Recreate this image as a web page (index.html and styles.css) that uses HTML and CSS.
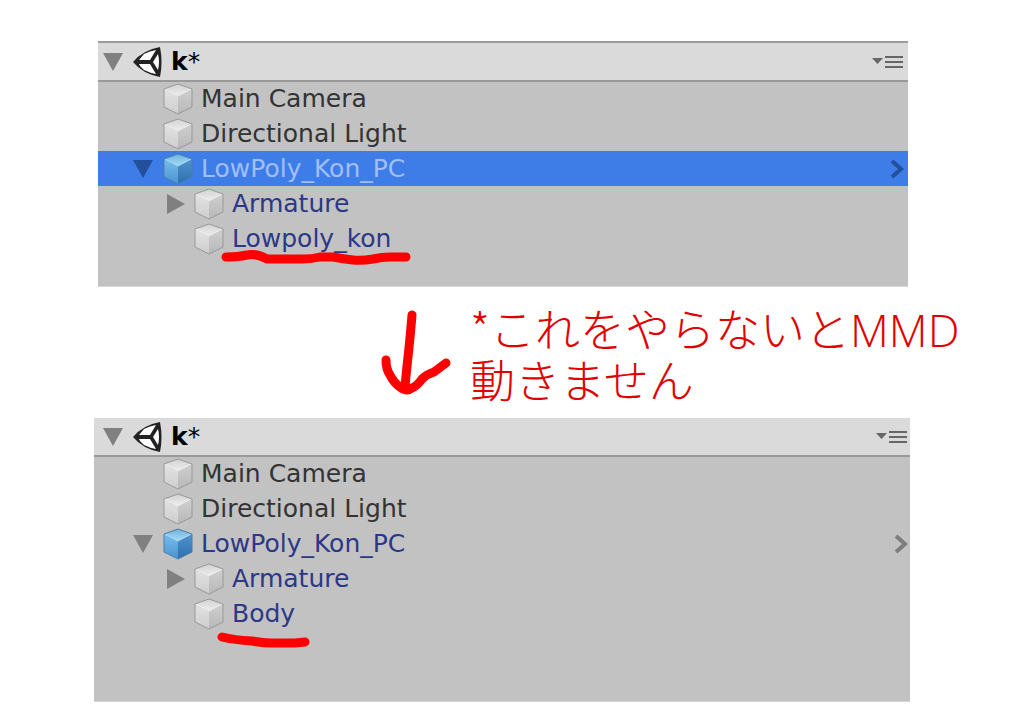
FILE: index.html
```html
<!DOCTYPE html>
<html lang="ja">
<head>
    <meta charset="UTF-8">
    <title>Hierarchy</title>
    <meta name="viewport" content="width=device-width,initial-scale=1.0">
    <link rel="stylesheet" href="styles.css">
</head>
<body>
    <!-- shared icons -->
    <svg class="defs" aria-hidden="true">
        <defs>
            <linearGradient id="grayTop" x1="0" y1="0" x2="0" y2="1">
                <stop offset="0" stop-color="#d2d2d2"/>
                <stop offset="1" stop-color="#eeeeee"/>
            </linearGradient>
            <linearGradient id="grayLeft" x1="0" y1="0" x2="0" y2="1">
                <stop offset="0" stop-color="#e2e2e2"/>
                <stop offset="1" stop-color="#cecece"/>
            </linearGradient>
            <linearGradient id="grayRight" x1="0" y1="0" x2="0" y2="1">
                <stop offset="0" stop-color="#cfcfcf"/>
                <stop offset="1" stop-color="#b8b8b8"/>
            </linearGradient>
            <linearGradient id="blueTop" x1="0" y1="0" x2="0" y2="1">
                <stop offset="0" stop-color="#6fb2dc"/>
                <stop offset="1" stop-color="#a6dcf6"/>
            </linearGradient>
            <linearGradient id="blueLeft" x1="0" y1="0" x2="0" y2="1">
                <stop offset="0" stop-color="#79bdec"/>
                <stop offset="1" stop-color="#4a93d2"/>
            </linearGradient>
            <linearGradient id="blueRight" x1="0" y1="0" x2="0" y2="1">
                <stop offset="0" stop-color="#4e93cf"/>
                <stop offset="1" stop-color="#2f70ae"/>
            </linearGradient>
        </defs>
        <symbol id="cube" viewBox="0 0 30 32">
            <path d="M1 6 15 1l14 5-14 7z" fill="url(#grayTop)"/>
            <path d="M1 6l14 7v18L1 24z" fill="url(#grayLeft)"/>
            <path d="M29 6l-14 7v18l14-7z" fill="url(#grayRight)"/>
            <path d="M2 6l13 7 13-7" fill="none" stroke="#ededed"/>
            <path d="M1 6 15 1l14 5v18l-14 7-14-7z" fill="none" stroke="#999" stroke-linejoin="round"/>
        </symbol>
        <symbol id="prefab" viewBox="0 0 30 32">
            <path d="M1 6 15 1l14 5-14 7z" fill="url(#blueTop)"/>
            <path d="M1 6l14 7v18L1 24z" fill="url(#blueLeft)"/>
            <path d="M29 6l-14 7v18l14-7z" fill="url(#blueRight)"/>
            <path d="M2 6l13 7 13-7" fill="none" stroke="#a9dcf8"/>
            <path d="M1 6 15 1l14 5v18l-14 7-14-7z" fill="none" stroke="#4a7fa8" stroke-linejoin="round"/>
        </symbol>
        <symbol id="unity" viewBox="0 0 30 32">
            <path d="M0 16Q10 4 27 1q3 15 0 30Q10 28 0 16z" fill="#222"/>
            <path d="M11 8q6-3 12-4l-6 10H6zM6 18h11l6 10q-6-1-12-4l-4-4zM25 8q2 8 0 16l-5-8z" fill="#fff"/>
        </symbol>
        <symbol id="down" viewBox="0 0 20 18"><path d="M0 0h20L10 18z"/></symbol>
        <symbol id="right" viewBox="0 0 18 20"><path d="M0 0v20l18-10z"/></symbol>
        <symbol id="menu" viewBox="0 0 32 14">
            <path d="M0 3h11L5.500 9z"/>
            <path d="M13 1h18v2H13zM13 6h18v2H13zM13 11h18v2H13z"/>
        </symbol>
        <symbol id="open" viewBox="0 0 14 20">
            <path d="M2 2l9 8-9 8" fill="none" stroke="currentColor" stroke-width="4"/>
        </symbol>
    </svg>

    <main>
        <section class="panel before">
            <header class="scene">
                <button class="fold" aria-label="Fold scene"><svg class="down"><use href="#down"/></svg></button>
                <svg class="icon"><use href="#unity"/></svg>
                <h2><b>k</b>*</h2>
                <button class="menu" aria-label="Scene menu"><svg><use href="#menu"/></svg></button>
            </header>
            <ul class="tree">
                <li class="row"><span class="fold"></span><svg class="icon"><use href="#cube"/></svg><span class="name">Main Camera</span></li>
                <li class="row"><span class="fold"></span><svg class="icon"><use href="#cube"/></svg><span class="name">Directional Light</span></li>
                <li class="row prefab selected">
                    <button class="fold" aria-label="Fold"><svg class="down"><use href="#down"/></svg></button>
                    <svg class="icon"><use href="#prefab"/></svg>
                    <span class="name">LowPoly_Kon_PC</span>
                    <button class="open" aria-label="Open prefab"><svg><use href="#open"/></svg></button>
                </li>
                <li class="row prefab child">
                    <button class="fold" aria-label="Unfold"><svg class="right"><use href="#right"/></svg></button>
                    <svg class="icon"><use href="#cube"/></svg>
                    <span class="name">Armature</span>
                </li>
                <li class="row prefab child">
                    <span class="fold"></span><svg class="icon"><use href="#cube"/></svg>
                    <span class="name">Lowpoly_kon
                        <svg class="marker" viewBox="0 0 200 20"><path d="M10 7Q22 7 31 5T51 9H87Q96 9 104 7H117Q128 9 137 10T157 9Q166 7 174 7H190"/></svg>
                    </span>
                </li>
            </ul>
        </section>

        <div class="step">
            <svg class="arrow" viewBox="0 0 72 88"><path d="M32 6Q30 30 28 48T25 78M6 51Q6 60 10 66 14 74 20 78 27 83 32 79 37 77 42 70 47 65 54 63L66 54"/></svg>
            <p class="note">*これをやらないと<span class="latin">MMD</span><br>動きません</p>
        </div>

        <section class="panel after">
            <header class="scene">
                <button class="fold" aria-label="Fold scene"><svg class="down"><use href="#down"/></svg></button>
                <svg class="icon"><use href="#unity"/></svg>
                <h2><b>k</b>*</h2>
                <button class="menu" aria-label="Scene menu"><svg><use href="#menu"/></svg></button>
            </header>
            <ul class="tree">
                <li class="row"><span class="fold"></span><svg class="icon"><use href="#cube"/></svg><span class="name">Main Camera</span></li>
                <li class="row"><span class="fold"></span><svg class="icon"><use href="#cube"/></svg><span class="name">Directional Light</span></li>
                <li class="row prefab">
                    <button class="fold" aria-label="Fold"><svg class="down"><use href="#down"/></svg></button>
                    <svg class="icon"><use href="#prefab"/></svg>
                    <span class="name">LowPoly_Kon_PC</span>
                    <button class="open" aria-label="Open prefab"><svg><use href="#open"/></svg></button>
                </li>
                <li class="row prefab child">
                    <button class="fold" aria-label="Unfold"><svg class="right"><use href="#right"/></svg></button>
                    <svg class="icon"><use href="#cube"/></svg>
                    <span class="name">Armature</span>
                </li>
                <li class="row prefab child">
                    <span class="fold"></span><svg class="icon"><use href="#cube"/></svg>
                    <span class="name">Body
                        <svg class="marker" viewBox="0 0 200 20"><path d="M6 12Q18 15 36 16 47 18 55 18H79L89 17"/></svg>
                    </span>
                </li>
            </ul>
        </section>
    </main>
</body>
</html>
```
FILE: styles.css
```css
*{
    margin: 0;
    padding: 0;
    box-sizing: border-box;
}
body{
    background: #fff;
    color: #333;
    font-family: "DejaVu Sans", Verdana, sans-serif;
    font-size: 25px;
}
button{
    border: 0;
    background: none;
    color: inherit;
    cursor: pointer;
}
svg{
    display: block;
    fill: currentColor;
}
.defs{
    position: absolute;
    width: 0;
    height: 0;
}
main{
    padding-top: 41px;
}

/* hierarchy panel */
.panel{
    background: #c2c2c2;
    border-bottom: 1px solid #d6d6d6;
}
.before{
    margin: 0 116px 0 98px;
    padding-bottom: 30px;
    border-top: 2px solid #9c9c9c;
}
.after{
    margin: 0 114px 0 94px;
    padding-bottom: 70px;
}
.scene{
    display: flex;
    align-items: center;
    height: 39px;
    background: #dadada;
    border-bottom: 2px solid #999;
}
.scene, .row{
    padding-left: 5px;
    padding-right: 4px;
}
.after .scene, .after .row{
    padding-left: 9px;
    padding-right: 2px;
}
.scene h2{
    color: #000;
    font-size: 25px;
    font-weight: 400;
    line-height: 35px;
}
.scene b{
    font-weight: 700;
}
.tree{
    margin-top: -1px;
    list-style: none;
}
.row{
    display: flex;
    align-items: center;
    height: 35px;
    line-height: 35px;
}
.row > .fold{
    margin-left: 30px;
}
.child > .fold{
    margin-left: 61px;
}
.fold{
    flex: none;
    width: 30px;
    color: #808080;
}
.down{
    width: 20px;
    height: 18px;
}
.right{
    width: 18px;
    height: 20px;
    margin-left: 3px;
}
.icon{
    flex: none;
    width: 30px;
    height: 32px;
    margin-right: 8px;
}
.name{
    position: relative;
    white-space: nowrap;
}
.prefab{
    color: #2b3886;
}
.selected{
    background: #3e7de7;
    color: #a0bffb;
}
.selected .fold, .selected .open{
    color: #234f9c;
}
.menu, .open{
    margin-left: auto;
    color: #666;
}
.menu svg{
    width: 32px;
    height: 14px;
}
.open{
    color: #7d7d7d;
}
.open svg{
    width: 14px;
    height: 20px;
}

/* red pen */
.marker{
    position: absolute;
    left: -16px;
    top: 29px;
    width: 200px;
    height: 20px;
    overflow: visible;
}
.marker, .arrow{
    fill: none;
    stroke: #f00;
    stroke-width: 9px;
    stroke-linecap: round;
    stroke-linejoin: round;
}
.step{
    display: flex;
    align-items: center;
    gap: 18px;
    padding: 15px 0 14px 380px;
}
.arrow{
    flex: none;
    width: 72px;
    height: 88px;
}
.note{
    color: #e00000;
    font-family: "Noto Sans CJK JP", sans-serif;
    font-size: 45px;
    font-weight: 300;
    line-height: 51px;
    white-space: nowrap;
}
.latin{
    font-family: "Open Sans", sans-serif;
    line-height: 1;
}
```
